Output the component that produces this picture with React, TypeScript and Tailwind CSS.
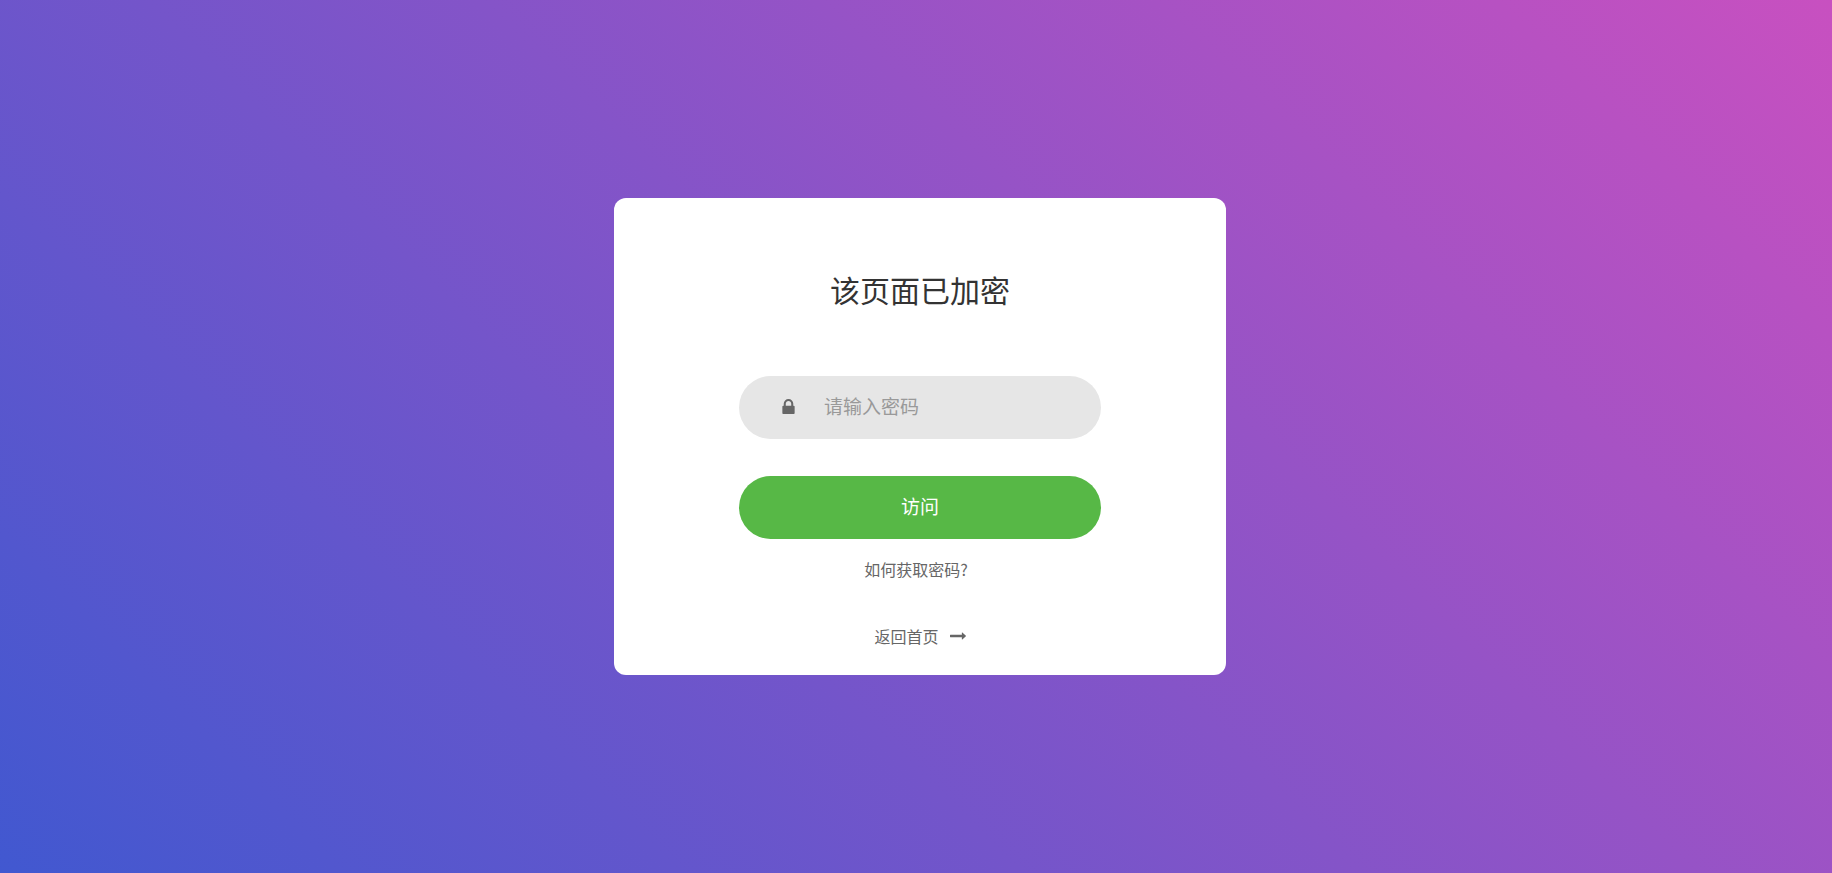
import { useState } from 'react';

function LockIcon() {
  return (
    <svg viewBox="0 0 1152 1408" className="h-[15px] w-[13px] shrink-0" fill="currentColor" aria-hidden="true">
      <path
        transform="translate(0 1408) scale(1 -1)"
        d="M320 768h512v192q0 106 -75 181t-181 75t-181 -75t-75 -181v-192zM1152 672v-576q0 -40 -28 -68t-68 -28h-960q-40 0 -68 28t-28 68v576q0 40 28 68t68 28h32v192q0 184 132 316t316 132t316 -132t132 -316v-192h32q40 0 68 -28t28 -68z"
      />
    </svg>
  );
}

function LongArrowIcon() {
  return (
    <svg viewBox="0 0 1728 768" className="h-2 w-4 shrink-0" fill="currentColor" aria-hidden="true">
      <path
        transform="translate(0 1024) scale(1 -1)"
        d="M1728 643q0 -14 -10 -24l-384 -354q-16 -14 -35 -6q-19 9 -19 29v224h-1248q-14 0 -23 9t-9 23v192q0 14 9 23t23 9h1248v224q0 21 19 29t35 -5l384 -350q10 -10 10 -23z"
      />
    </svg>
  );
}

export default function App() {
  const [password, setPassword] = useState('');

  return (
    <main
      lang="zh-CN"
      className="flex min-h-screen items-center justify-center bg-[linear-gradient(-135deg,#c850c0,#4158d0)] py-4 pr-4 pl-6 font-['Noto_Sans_CJK_SC',sans-serif] text-[#666666]"
    >
      <section className="flex w-full max-w-[612px] flex-col items-center rounded-xl bg-white px-6 pt-[71px] pb-[27px]">
        <form className="flex w-full max-w-[362px] flex-col" onSubmit={(e) => e.preventDefault()}>
          <h1 className="mb-[67px] text-center text-[30px] leading-10 font-normal text-[#333333]">该页面已加密</h1>
          <label className="mb-[37px] flex h-[63px] items-center gap-[29px] rounded-full bg-[#e6e6e6] pr-8 pb-[3px] pl-[43px]">
            <LockIcon />
            <input
              type="password"
              aria-label="密码"
              placeholder="请输入密码"
              value={password}
              onChange={(e) => setPassword(e.target.value)}
              className="min-w-0 flex-1 bg-transparent text-[19px] outline-none placeholder:text-[#999999]"
            />
          </label>
          <button
            type="submit"
            className="h-[63px] cursor-pointer rounded-full bg-[#57b846] pb-[3px] text-[19px] text-white"
          >
            访问
          </button>
        </form>
        <a href="#help" className="mt-[18px] mr-2 text-base leading-6">
          如何获取密码?
        </a>
        <a href="#home" className="mt-[43px] flex items-center gap-[11px] text-base leading-6">
          返回首页
          <LongArrowIcon />
        </a>
      </section>
    </main>
  );
}
